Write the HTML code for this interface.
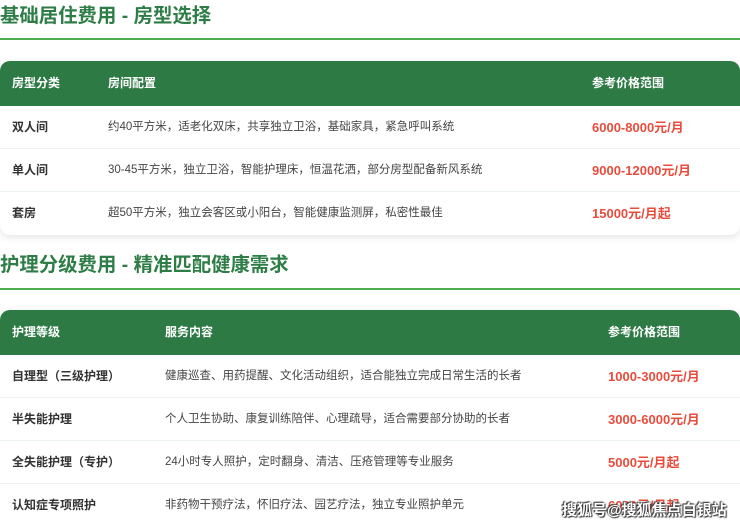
<!DOCTYPE html>
<html><head><meta charset="utf-8"><style>
*{margin:0;padding:0;box-sizing:border-box}
html,body{width:740px;height:525px;overflow:hidden}
body{background:#fff;font-family:"Liberation Sans","Noto Sans CJK SC",sans-serif;position:relative}
h2{position:absolute;left:0;font-size:19.4px;font-weight:bold;color:#2e7d47;line-height:24px}
.line{position:absolute;left:0;width:740px;height:2px;background:#4cae50}
.tbl{position:absolute;left:0;width:740px;border-radius:10px;overflow:hidden;box-shadow:0 2px 8px rgba(0,0,0,.12);background:#fff}
.row{position:relative;height:43px;border-bottom:1px solid #eef5ef;font-size:11.5px;color:#444}
.row span{position:absolute;top:0;line-height:43px;white-space:nowrap}
.hd{height:45px;background:#2d7a45;color:#fff;font-weight:bold;font-size:12px;border:none}
.hd span{line-height:45px}
.b{font-weight:bold;color:#333;font-size:12px}
.p{font-weight:bold;color:#e74c3c;font-size:13px}
.wm{position:absolute;left:562px;top:499px;font-size:15px;color:#fff;text-shadow:0 0 2px #333,1px 1px 1px #333,-1px -1px 1px #333;font-weight:bold}
</style></head><body>
<h2 style="top:4px">基础居住费用 - 房型选择</h2>
<div class="line" style="top:38px"></div>
<div class="tbl" style="top:61px">
<div class="row hd"><span style="left:12px">房型分类</span><span style="left:108px">房间配置</span><span style="left:592px">参考价格范围</span></div>
<div class="row"><span class="b" style="left:12px">双人间</span><span style="left:108px">约40平方米，适老化双床，共享独立卫浴，基础家具，紧急呼叫系统</span><span class="p" style="left:592px">6000-8000元/月</span></div>
<div class="row"><span class="b" style="left:12px">单人间</span><span style="left:108px">30-45平方米，独立卫浴，智能护理床，恒温花洒，部分房型配备新风系统</span><span class="p" style="left:592px">9000-12000元/月</span></div>
<div class="row" style="border:none"><span class="b" style="left:12px">套房</span><span style="left:108px">超50平方米，独立会客区或小阳台，智能健康监测屏，私密性最佳</span><span class="p" style="left:592px">15000元/月起</span></div>
</div>
<h2 style="top:253px">护理分级费用 - 精准匹配健康需求</h2>
<div class="line" style="top:288px"></div>
<div class="tbl" style="top:310px;height:230px">
<div class="row hd"><span style="left:12px">护理等级</span><span style="left:165px">服务内容</span><span style="left:608px">参考价格范围</span></div>
<div class="row"><span class="b" style="left:12px">自理型（三级护理）</span><span style="left:165px">健康巡查、用药提醒、文化活动组织，适合能独立完成日常生活的长者</span><span class="p" style="left:608px">1000-3000元/月</span></div>
<div class="row"><span class="b" style="left:12px">半失能护理</span><span style="left:165px">个人卫生协助、康复训练陪伴、心理疏导，适合需要部分协助的长者</span><span class="p" style="left:608px">3000-6000元/月</span></div>
<div class="row"><span class="b" style="left:12px">全失能护理（专护）</span><span style="left:165px">24小时专人照护，定时翻身、清洁、压疮管理等专业服务</span><span class="p" style="left:608px">5000元/月起</span></div>
<div class="row"><span class="b" style="left:12px">认知症专项照护</span><span style="left:165px">非药物干预疗法，怀旧疗法、园艺疗法，独立专业照护单元</span><span class="p" style="left:608px">6000元/月起</span></div>
</div>
<div class="wm">搜狐号@搜狐焦点白银站</div>
</body></html>
